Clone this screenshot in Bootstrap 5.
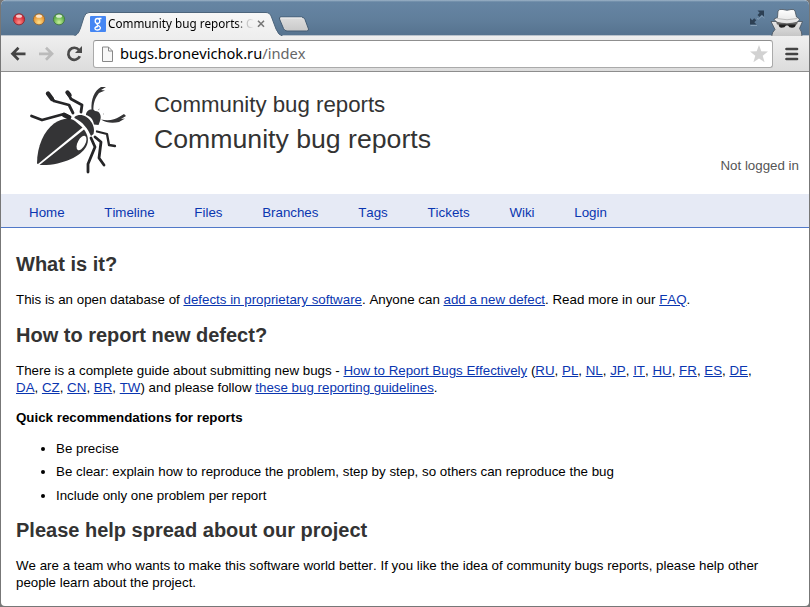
<!DOCTYPE html>
<html lang="en">
<head>
<meta charset="utf-8">
<meta name="viewport" content="width=device-width, initial-scale=1">
<title>Community bug reports</title>
<link href="https://cdn.jsdelivr.net/npm/bootstrap@5.3.0/dist/css/bootstrap.min.css" rel="stylesheet">
<style>
body{width:810px;height:607px;background:#777;font-family:"Liberation Sans",Arial,sans-serif;font-size:13.333px;line-height:17px;color:#000;font-kerning:none}
.window{height:606px;margin:0 1px;border-radius:5px 5px 4px 4px;background:#fff}
.tabstrip{height:36px;background:linear-gradient(#9fb4c8 0,#6685a3 2px,#607e9b 20px,#56738f);border-bottom:1px solid #b9c2cb}
.chromefont{font-family:"Noto Sans","Open Sans",sans-serif;white-space:nowrap}
.tabtitle{left:107px;top:15px;font-size:11.7px;line-height:17px;background:linear-gradient(90deg,#000 0,#000 128px,#bbb 138px,#e4e4e4 145px);-webkit-background-clip:text;background-clip:text;color:transparent}
.toolbar{height:36px;background:linear-gradient(#efefef,#dcdcdc);border-bottom:1px solid #8d8d8d}
.address{height:28px;margin-top:4px;border:1px solid #aaa;border-top-color:#8f8f8f;border-radius:3px;background:#fff;font-size:14.65px;line-height:26px}
.pageicon{margin:0 7px 0 8px}
.urltext{padding-bottom:2px}
.urlpath{color:#666}
.masthead{height:122px}
.masttext{margin-left:23px;padding-top:18px;color:#333}
.masttext h2{font-size:22.25px;line-height:30px;font-weight:400;margin:0}
.masttext h1{font-size:26.67px;line-height:36px;font-weight:400;margin:0;padding-top:1px}
.userstate{color:#555;padding-bottom:20px;padding-right:10px}
.mainmenu{height:34px;background:#e6eaf5;border-bottom:1px solid #5078c8;gap:39.7px;padding:4px 0 0 28px}
.mainmenu .nav-link{padding:0;color:#0a36b0}
.page{padding:24px 30px 0 15px}
.page h3{font-size:20px;line-height:24px;font-weight:700;color:#333;margin:0}
.page a{color:#0a36b0}
.page p{margin:15px 0}
.page .subhead{margin:-2px 0 14px}
.page .tips{margin:0;padding-left:40px}
.tips li{margin-bottom:6.3px}
.page .tips+h3{margin-top:14px}
</style>
<script src="https://cdn.jsdelivr.net/npm/bootstrap@5.3.0/dist/js/bootstrap.bundle.min.js"></script>
</head>
<body class="overflow-hidden">
<div class="window overflow-hidden">
  <div class="tabstrip position-relative">
    <svg class="d-block" width="808" height="36" viewBox="1 0 808 36">
      <defs>
        <linearGradient id="tabfill" x2="0" y2="1"><stop stop-color="#f7f7f7"/><stop offset="1" stop-color="#eee"/></linearGradient>
        <linearGradient id="newfill" x2="0" y2="1"><stop stop-color="#dedede"/><stop offset="1" stop-color="#c9c9c9"/></linearGradient>
        <radialGradient id="red" cy=".75"><stop stop-color="#ff8f88"/><stop offset="1" stop-color="#d8303b"/></radialGradient>
        <radialGradient id="amber" cy=".75"><stop stop-color="#ffe08a"/><stop offset="1" stop-color="#e99a38"/></radialGradient>
        <radialGradient id="green" cy=".75"><stop stop-color="#c7f09a"/><stop offset="1" stop-color="#62b04c"/></radialGradient>
        <linearGradient id="spy" x2="0" y2="1"><stop stop-color="#fff"/><stop offset="1" stop-color="#c4c4c4"/></linearGradient>
      </defs>
      <g stroke-width="1">
        <circle cx="19" cy="19.300" r="5.600" fill="url(#red)" stroke="#8c2f3b"/>
        <circle cx="39" cy="19.300" r="5.600" fill="url(#amber)" stroke="#8e6b41"/>
        <circle cx="59" cy="19.300" r="5.600" fill="url(#green)" stroke="#457a4b"/>
        <g fill="#fff" opacity=".75"><ellipse cx="19" cy="16.200" rx="3" ry="1.600"/><ellipse cx="39" cy="16.200" rx="3" ry="1.600"/><ellipse cx="59" cy="16.200" rx="3" ry="1.600"/></g>
      </g>
      <path d="M72 37C78 35 79 32 80.500 28L84 17Q85.500 12.500 89 12.500H266Q270 12.500 271.500 17L276 29Q278 35 284 37Z" fill="url(#tabfill)" stroke="#4d657c"/>
      <path d="M280.500 17H301.500Q304 17 305 19.500L308.500 29Q309 31 306.500 31H287Q284.500 31 283.500 28.500L279.500 19Q279 17 280.500 17Z" fill="url(#newfill)" stroke="#435b72"/>
      <path d="M281 18H302" stroke="#f0f0f0"/>
      <rect x="90" y="16" width="16" height="16" rx="1" fill="#4586f3"/>
      <g fill="none" stroke="#fff" stroke-width="1.300"><ellipse cx="97.500" cy="21" rx="2.300" ry="2.500"/><path d="M98.500 18.500H101.500M98.300 23.500C95.800 24.300 97.500 25.300 99.300 26.200C101.500 27.600 100.300 30 97.500 30C94 30 94 26.800 98 26.500"/></g>
      <path d="M258 20.800L264 26.800M264 20.800L258 26.800" stroke="#777" stroke-width="1.600"/>
      <path d="M757.500 10.500H764V17L761.800 14.800L759.500 17L757.500 15L759.700 12.700ZM750 18L752.200 20.200L754.200 18.200L756.300 20.300L754.300 22.300L756.500 24.500H750Z" fill="#2d4054"/>
      <path d="M750.500 25.500H757M757 18.500L758.500 19L762 15.800L764.500 18" fill="none" stroke="#90a7bc" stroke-width=".8"/>
      <path d="M777.500 17.500L778 11Q779 8.800 783 9.500L787 10.300L791 9.500Q794.500 9 795 11L796.500 17L799.500 19Q800 20.500 797.500 21.500H802.500L799.500 28.500Q802 31 802 37H771.500Q772 32 775 29.500L771 21.500H776.500Q774 20.500 774 19Z" fill="url(#spy)" stroke="#48525c" stroke-width=".8"/>
      <path d="M777 18.500Q787 21 797 18.500" fill="none" stroke="#bbb"/>
      <path d="M776 21.500Q787 25 798 21.500L797 24.500H777Z" fill="#666"/>
      <path d="M778.500 24.300H796Q795.500 27.800 792 27.800Q789 27.800 788 25.500H786Q785 27.800 781.500 27.800Q779 27.800 778.500 24.300Z" fill="#222"/>
    </svg>
    <div class="tabtitle chromefont position-absolute">Community bug reports: C</div>
  </div>
  <div class="toolbar d-flex">
    <svg class="flex-shrink-0" width="92" height="35" viewBox="1 36 92 35" fill="none">
      <path d="M25.500 53.800H13M18.500 47.800L12.500 53.800L18.500 59.800" stroke="#444" stroke-width="2.700"/>
      <path d="M39 53.800H51.500M46 47.800L52 53.800L46 59.800" stroke="#bbb" stroke-width="2.700"/>
      <path d="M79 50A6 6 0 1 0 79.800 56.200" stroke="#4a4a4a" stroke-width="2.700"/>
      <path d="M82 46V53H75Z" fill="#4a4a4a"/>
    </svg>
    <div class="address chromefont flex-grow-1 d-flex align-items-center">
      <svg class="pageicon flex-shrink-0" width="11" height="16" viewBox="0 0 11 16" fill="#f7f7f7" stroke="#888"><path d="M.5 1H6.500L10.500 5V15.500H.5ZM6.500 1V5H10.500"/></svg>
      <span class="urltext flex-grow-1">bugs.bronevichok.ru<span class="urlpath">/index</span></span>
      <svg class="me-1" width="18" height="18" viewBox="0 0 18 18" fill="#d2d2d2"><path d="M9 0L11.300 6.300L18 6.600L12.700 10.700L14.600 17.200L9 13.500L3.400 17.200L5.300 10.700L0 6.600L6.700 6.300Z"/></svg>
    </div>
    <svg class="flex-shrink-0" width="36" height="35" viewBox="773 36 36 35"><path d="M786.500 49H797M786.500 54H797M786.500 59H797" stroke="#444" stroke-width="2.700" stroke-linecap="round"/></svg>
  </div>
  <header class="masthead d-flex">
    <svg class="flex-shrink-0" width="130" height="122" viewBox="1 72 130 122" fill="#343436">
      <path d="M37 163.500C37 146 44 131 54 123.500C61 118.500 70 117 75 121L82.500 127.500L38 164Z"/>
      <path d="M39.500 165L84 129.500C88 135 89.500 141 86 147C81 156 62 166 39.500 165Z"/>
      <ellipse cx="81.500" cy="143" rx="3.800" ry="7.800" transform="rotate(28 81.500 143)" fill="#fff"/>
      <path d="M74.500 117C84 110 97 124 93.500 134L91 136C88 129 83 122 74.500 118Z"/>
      <path d="M86 115C86 110 92 108 95 111C100 111 102 116 100 121L98.500 125L94 124.500C93 119 90 116 86 115Z"/>
      <path d="M91.500 110C91 99 94 91 101 87L106 87L101 90L105 90.500L99 93C95 98 93 104 93.500 111Z"/>
      <path d="M101 119.500C108 121 115 120 119 117L124 114L126 116L121 119L125 118.500L119 122C113 123.500 106 123 101 119.500Z"/>
      <g fill="none" stroke="#252527" stroke-linecap="round" stroke-linejoin="round" stroke-width="2.800">
        <path d="M47.500 93.500L54 101L69 105L73 113"/><path d="M67.500 92.500L71 99L82 105L81 112"/><path d="M31.500 116L42 120L64 114L70 117"/>
        <path d="M91 138L95 147L88 164V172"/><path d="M95 137L101 142L99 158L104 165"/><path d="M97 131.500L107 134L109 145L115 146" stroke-width="2.300"/>
      </g>
      <path d="M48 93.500L52 99M67.500 92.500L69.500 95M64 115L69 117.500" stroke="#252527" stroke-width="4.400" stroke-linecap="round"/>
      <path d="M98 110L99.500 109M103 114H104" stroke="#aaa"/>
    </svg>
    <div class="masttext flex-grow-1"><h2>Community bug reports</h2><h1>Community bug reports</h1></div>
    <div class="userstate align-self-end">Not logged in</div>
  </header>
  <nav class="mainmenu nav flex-nowrap align-items-center">
    <a class="nav-link" href="#">Home</a><a class="nav-link" href="#">Timeline</a><a class="nav-link" href="#">Files</a><a class="nav-link" href="#">Branches</a><a class="nav-link" href="#">Tags</a><a class="nav-link" href="#">Tickets</a><a class="nav-link" href="#">Wiki</a><a class="nav-link" href="#">Login</a>
  </nav>
  <main class="page">
    <h3>What is it?</h3>
    <p>This is an open database of <a href="#">defects in proprietary software</a>. Anyone can <a href="#">add a new defect</a>. Read more in our <a href="#">FAQ</a>.</p>
    <h3>How to report new defect?</h3>
    <p>There is a complete guide about submitting new bugs - <a href="#">How to Report Bugs Effectively</a> (<a href="#">RU</a>, <a href="#">PL</a>, <a href="#">NL</a>, <a href="#">JP</a>, <a href="#">IT</a>, <a href="#">HU</a>, <a href="#">FR</a>, <a href="#">ES</a>, <a href="#">DE</a>,<br><a href="#">DA</a>, <a href="#">CZ</a>, <a href="#">CN</a>, <a href="#">BR</a>, <a href="#">TW</a>) and please follow <a href="#">these bug reporting guidelines</a>.</p>
    <p class="subhead fw-bold">Quick recommendations for reports</p>
    <ul class="tips"><li>Be precise</li><li>Be clear: explain how to reproduce the problem, step by step, so others can reproduce the bug</li><li>Include only one problem per report</li></ul>
    <h3>Please help spread about our project</h3>
    <p>We are a team who wants to make this software world better. If you like the idea of community bugs reports, please help other<br>people learn about the project.</p>
  </main>
</div>
</body>
</html>
